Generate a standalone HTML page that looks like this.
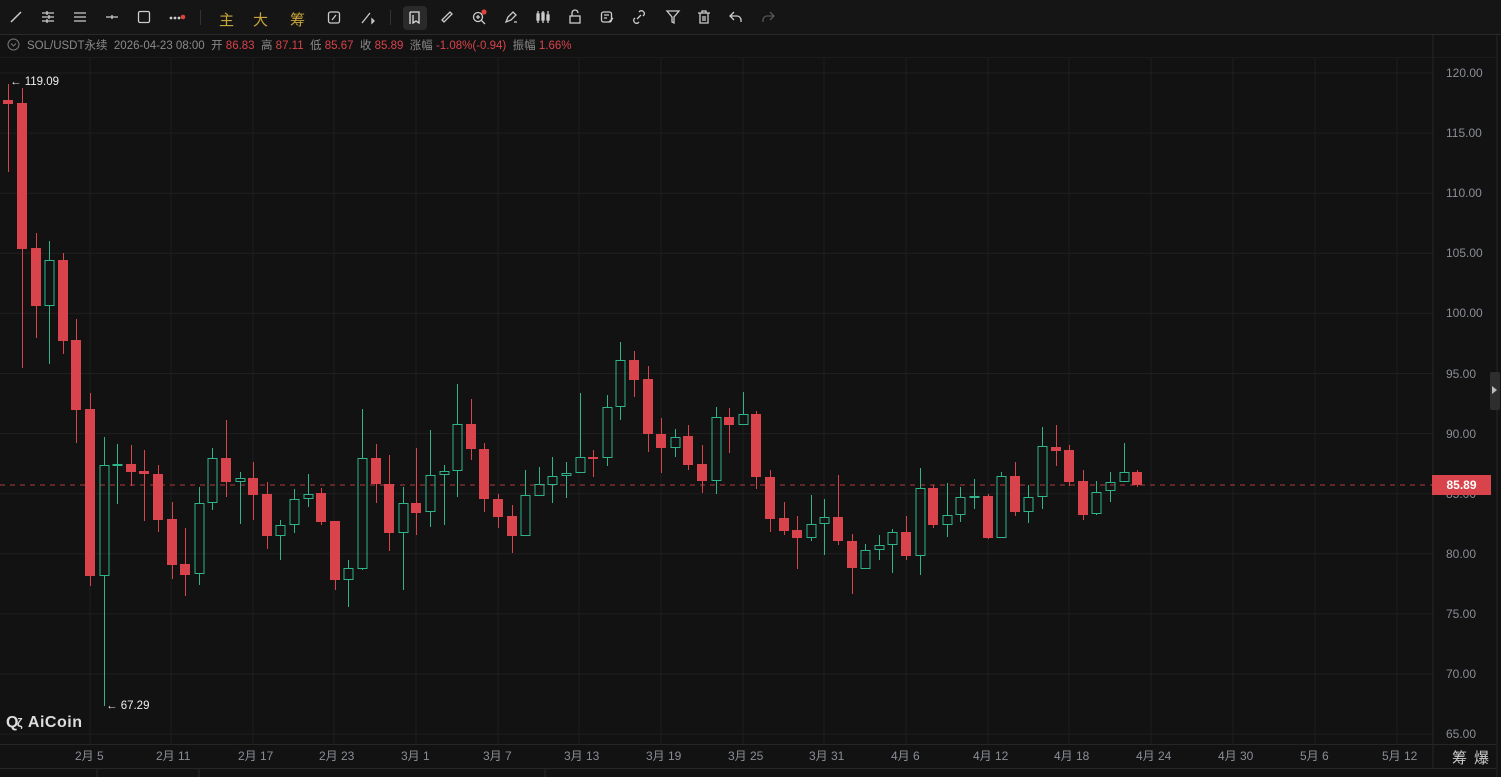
<!DOCTYPE html>
<html><head><meta charset="utf-8">
<style>
html,body{margin:0;padding:0;background:#121212;width:1501px;height:777px;overflow:hidden;font-family:"Liberation Sans","Noto Sans CJK SC",sans-serif;}
#tb{position:absolute;left:0;top:0;width:1501px;height:34px;background:#151515;border-bottom:1px solid #2a2a2a;}
.ic{position:absolute;top:9px;width:16px;height:16px;}
.cn{position:absolute;top:9px;font-size:15px;color:#c9a53a;}
#info{position:absolute;left:0;top:36px;font-size:11.5px;color:#8a8a8a;white-space:nowrap;}
#info .r{color:#d9434b}
.pl{position:absolute;left:1446px;font-size:12px;color:#8a8e96;}
.dl{position:absolute;top:747px;font-size:12px;color:#8a8e96;}
</style></head><body>
<div id="tb">
<svg class="ic" style="left:8px" viewBox="0 0 16 16"><path d="M3 13L13 3" stroke="#ccc" stroke-width="1.5"/></svg>
<svg class="ic" style="left:40px" viewBox="0 0 16 16" stroke="#ccc" stroke-width="1.3" fill="none"><path d="M2 4h12M2 8h12M2 12h12M7 2v4M9 6v4M7 10v4"/></svg>
<svg class="ic" style="left:72px" viewBox="0 0 16 16" stroke="#ccc" stroke-width="1.3"><path d="M2 4h12M2 8h12M2 12h12"/></svg>
<svg class="ic" style="left:104px" viewBox="0 0 16 16" stroke="#ccc" stroke-width="1.3"><path d="M2 8h12M8 6v4"/></svg>
<svg class="ic" style="left:136px" viewBox="0 0 16 16" stroke="#ccc" stroke-width="1.3" fill="none"><rect x="2.5" y="2.5" width="11" height="11" rx="1.5"/></svg>
<svg class="ic" style="left:168px;width:20px" viewBox="0 0 20 16"><circle cx="3" cy="9" r="1.4" fill="#ccc"/><circle cx="7" cy="9" r="1.4" fill="#ccc"/><circle cx="11" cy="9" r="1.4" fill="#ccc"/><circle cx="15" cy="8" r="2.3" fill="#e0433b"/></svg>
<div style="position:absolute;left:200px;top:10px;width:1px;height:15px;background:#333"></div>
<span class="cn" style="left:219px">主</span><span class="cn" style="left:253px">大</span><span class="cn" style="left:290px">筹</span>
<svg class="ic" style="left:326px" viewBox="0 0 16 16" stroke="#ccc" stroke-width="1.3" fill="none"><rect x="2.5" y="3" width="11" height="11" rx="2"/><path d="M6 11l4-5"/></svg>
<svg class="ic" style="left:360px" viewBox="0 0 16 16" stroke="#ccc" stroke-width="1.3" fill="none"><path d="M2 14l8-10M12 10l2 2-2 2z"/></svg>
<div style="position:absolute;left:390px;top:10px;width:1px;height:15px;background:#333"></div>
<div style="position:absolute;left:403px;top:6px;width:24px;height:24px;background:#2a2a2a;border-radius:4px"></div>
<svg class="ic" style="left:407px;top:10px" viewBox="0 0 16 16" stroke="#ddd" stroke-width="1.3" fill="none"><path d="M3 2v12M3 2h9v11l-3-2-3 2V5"/></svg>
<svg class="ic" style="left:439px" viewBox="0 0 16 16" stroke="#ccc" stroke-width="1.3" fill="none"><path d="M3 11L11 3l2 2-8 8z"/></svg>
<svg class="ic" style="left:471px" viewBox="0 0 16 16" stroke="#ccc" stroke-width="1.3" fill="none"><circle cx="7" cy="8" r="4.5"/><path d="M10 11l4 4M5 8h4M7 6v4"/><circle cx="13" cy="3" r="2.6" fill="#e0433b" stroke="none"/></svg>
<svg class="ic" style="left:503px" viewBox="0 0 16 16" stroke="#ccc" stroke-width="1.3" fill="none"><path d="M3 13l2-5 5-5 3 3-5 5zM11 13h3"/></svg>
<svg class="ic" style="left:535px" viewBox="0 0 16 16" stroke="#ccc" stroke-width="1.3" fill="none"><path d="M3 2v12M8 2v12M13 2v12"/><rect x="2" y="5" width="2" height="6"/><rect x="7" y="4" width="2" height="7"/><rect x="12" y="6" width="2" height="5"/></svg>
<svg class="ic" style="left:567px" viewBox="0 0 16 16" stroke="#ccc" stroke-width="1.3" fill="none"><rect x="3" y="7" width="10" height="7"/><path d="M5 7V4a3 3 0 0 1 6 0"/></svg>
<svg class="ic" style="left:599px" viewBox="0 0 16 16" stroke="#ccc" stroke-width="1.3" fill="none"><rect x="2.5" y="3" width="10" height="10" rx="2"/><path d="M5 6h5M5 9h3M10 13l4-4"/></svg>
<svg class="ic" style="left:631px" viewBox="0 0 16 16" stroke="#ccc" stroke-width="1.3" fill="none"><path d="M6 10l4-4M4 9l-1 1a3 3 0 0 0 4 4l1-1M12 7l1-1a3 3 0 0 0-4-4L8 3"/></svg>
<svg class="ic" style="left:665px" viewBox="0 0 16 16" stroke="#ccc" stroke-width="1.3" fill="none"><path d="M2 2h12l-5 6v6l-2-1V8z"/></svg>
<svg class="ic" style="left:696px" viewBox="0 0 16 16" stroke="#ccc" stroke-width="1.3" fill="none"><path d="M2 4h12M6 4V2h4v2M4 4v10h8V4M7 7v5M9 7v5"/></svg>
<svg class="ic" style="left:728px" viewBox="0 0 16 16" stroke="#ccc" stroke-width="1.3" fill="none"><path d="M6 3L2 7l4 4M2 7h7a4 4 0 0 1 4 4v2"/></svg>
<svg class="ic" style="left:760px" viewBox="0 0 16 16" stroke="#555" stroke-width="1.3" fill="none"><path d="M10 3l4 4-4 4M14 7H7a4 4 0 0 0-4 4v2"/></svg>
</div>
<div id="info"><svg width="13" height="13" style="position:relative;left:7px;top:2px" viewBox="0 0 13 13"><circle cx="6.5" cy="6.5" r="5.5" stroke="#777" fill="none"/><path d="M4 5.5l2.5 2.5 2.5-2.5" stroke="#777" fill="none"/></svg><span style="margin-left:14px">SOL/USDT永续&nbsp; 2026-04-23 08:00&nbsp; 开 <span class="r">86.83</span>&nbsp; 高 <span class="r">87.11</span>&nbsp; 低 <span class="r">85.67</span>&nbsp; 收 <span class="r">85.89</span>&nbsp; 涨幅 <span class="r">-1.08%(-0.94)</span>&nbsp; 振幅 <span class="r">1.66%</span></span></div>
<div style="position:absolute;left:0;top:57px;width:1497px;height:1px;background:#1c1c1c"></div>
<svg id="ch" width="1501" height="777" style="position:absolute;left:0;top:0"></svg>
<div id="labels"></div>
<div style="position:absolute;left:1490px;top:372px;width:10px;height:38px;background:#2e2e2e;border-radius:2px"></div>
<div style="position:absolute;left:1492px;top:386px;width:0;height:0;border-left:5px solid #bbb;border-top:4px solid transparent;border-bottom:4px solid transparent"></div>
<div style="position:absolute;left:1432px;top:475px;width:59px;height:20px;background:#d9434b;color:#fff;font-size:12px;line-height:20px;text-align:center;font-weight:bold">85.89</div>
<div style="position:absolute;left:10px;top:76px;font-size:11.5px;color:#eee">← 119.09</div>
<div style="position:absolute;left:106px;top:700px;font-size:11.5px;color:#eee">← 67.29</div>
<div style="position:absolute;left:6px;top:714px;font-size:16px;color:#ddd;font-weight:bold;letter-spacing:0.5px">Q<span style="font-size:12px;margin-left:-2px">ζ</span> AiCoin</div>
<div style="position:absolute;left:1452px;top:747px;font-size:15px;color:#ccc;letter-spacing:7px">筹爆</div>
<script>
var s='';
// horizontal grid
for(var k=0;k<12;k++){var y=73+k*60.1;s+='<line x1="0" x2="1433" y1="'+y+'" y2="'+y+'" stroke="#1f1f1f"/>';}
var dx=[90,171,253,334,416,498,579,661,743,824,906,988,1069,1151,1233,1315,1397];
var dn=['2月 5','2月 11','2月 17','2月 23','3月 1','3月 7','3月 13','3月 19','3月 25','3月 31','4月 6','4月 12','4月 18','4月 24','4月 30','5月 6','5月 12'];
for(var i=0;i<dx.length;i++){s+='<line x1="'+dx[i]+'" x2="'+dx[i]+'" y1="58" y2="744" stroke="#1f1f1f"/>';}
s+='<line x1="1433" x2="1433" y1="35" y2="769" stroke="#262626"/>';
s+='<line x1="1497" x2="1497" y1="35" y2="777" stroke="#262626"/>';
s+='<line x1="0" x2="1497" y1="744.5" y2="744.5" stroke="#262626"/>';
s+='<line x1="0" x2="1497" y1="768.5" y2="768.5" stroke="#262626"/>';
s+='<line x1="97" x2="97" y1="769" y2="777" stroke="#262626"/><line x1="199" x2="199" y1="769" y2="777" stroke="#262626"/><line x1="545" x2="545" y1="769" y2="777" stroke="#262626"/>';
s+='<line x1="0" x2="1432" y1="485" y2="485" stroke="#d9434b" stroke-dasharray="5,5" opacity="0.8"/>';
var C=[[84,100,104,172,'r'],[88,103,249,368,'r'],[233,248,306,338,'r'],[241,260,306,364,'g'],[253,260,341,354,'r'],[319,340,410,443,'r'],[393,409,576,586,'r'],[437,465,576,706,'g'],[444,464,466,504,'g'],[445,464,472,486,'r'],[450,471,474,521,'r'],[465,474,520,532,'r'],[502,519,565,579,'r'],[528,564,575,596,'r'],[487,503,574,585,'g'],[448,458,503,510,'g'],[420,458,482,497,'r'],[472,478,482,524,'g'],[462,478,495,520,'r'],[482,494,536,549,'r'],[520,525,536,560,'g'],[489,499,525,533,'g'],[474,494,499,507,'g'],[488,493,522,525,'r'],[521,521,580,590,'r'],[560,568,580,607,'g'],[409,458,569,570,'g'],[444,458,484,503,'r'],[455,484,533,551,'r'],[487,503,533,590,'g'],[448,503,513,535,'r'],[430,475,512,527,'g'],[465,471,475,525,'g'],[384,424,471,497,'g'],[399,424,449,460,'r'],[443,449,499,512,'r'],[494,499,517,528,'r'],[505,516,536,553,'r'],[470,495,536,536,'g'],[467,484,496,496,'g'],[457,476,485,503,'g'],[462,473,476,498,'g'],[393,457,473,473,'g'],[450,457,458,477,'r'],[395,407,458,466,'g'],[342,360,407,420,'g'],[351,360,380,397,'r'],[366,379,434,452,'r'],[418,434,448,473,'r'],[429,437,448,457,'g'],[425,436,465,470,'r'],[445,464,481,493,'r'],[407,417,481,494,'g'],[408,417,425,453,'r'],[392,414,425,425,'g'],[411,414,477,489,'r'],[470,477,519,532,'r'],[502,518,531,535,'r'],[516,530,538,569,'r'],[495,524,538,541,'g'],[499,517,524,555,'g'],[475,517,541,545,'r'],[534,541,568,594,'r'],[544,550,569,569,'g'],[535,545,550,560,'g'],[529,532,545,573,'g'],[516,532,556,560,'r'],[468,488,556,575,'g'],[485,488,525,528,'r'],[483,515,525,537,'g'],[487,497,515,522,'g'],[479,496,497,509,'g'],[494,496,538,539,'r'],[472,476,538,538,'g'],[462,476,512,516,'r'],[485,497,512,523,'g'],[427,446,497,509,'g'],[425,447,451,466,'r'],[445,450,482,486,'r'],[470,481,515,520,'r'],[481,492,514,515,'g'],[472,482,491,502,'g'],[443,472,482,482,'g'],[470,472,485,487,'r']];
for(var i=0;i<C.length;i++){var c=C[i],x=Math.round(8.4+i*13.6)+0.5;
 if(c[4]=='r'){s+='<line x1="'+x+'" x2="'+x+'" y1="'+c[0]+'" y2="'+c[3]+'" stroke="#d9434b"/>';s+='<rect x="'+(x-5.5)+'" y="'+c[1]+'" width="10" height="'+Math.max(2,c[2]-c[1])+'" fill="#d9434b"/>';}
 else{s+='<line x1="'+x+'" x2="'+x+'" y1="'+c[0]+'" y2="'+c[1]+'" stroke="#2fb38a"/><line x1="'+x+'" x2="'+x+'" y1="'+c[2]+'" y2="'+c[3]+'" stroke="#2fb38a"/>';var h=c[2]-c[1];if(h<2){s+='<rect x="'+(x-5)+'" y="'+c[1]+'" width="10" height="2" fill="#2fb38a"/>';}else s+='<rect x="'+(x-4.5)+'" y="'+(c[1]+0.5)+'" width="9" height="'+(h-1)+'" fill="none" stroke="#2fb38a"/>';}
}
document.getElementById('ch').innerHTML=s;
var L='';
for(var k=0;k<12;k++){var y=73+k*60.1;L+='<div class="pl" style="top:'+(y-7)+'px">'+(120-5*k).toFixed(2)+'</div>';}
for(var i=0;i<dx.length;i++){L+='<div class="dl" style="left:'+(dx[i]-15)+'px">'+dn[i]+'</div>';}
document.getElementById('labels').innerHTML=L;
</script>
</body></html>
